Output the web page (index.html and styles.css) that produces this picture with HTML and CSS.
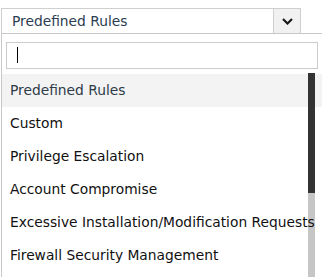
FILE: index.html
```html
<!DOCTYPE html>
<html lang="en">
<head>
    <meta charset="UTF-8">
    <title>Rule Type Select</title>
    <link rel="stylesheet" href="styles.css">
</head>
<body>
    <div class="select">
        <span class="select-value">Predefined Rules</span>
        <span class="select-arrow">
            <svg width="11" height="7" viewBox="0 0 11 7"><path d="M1 1 L5.5 5.5 L10 1" fill="none" stroke="#1a1a1a" stroke-width="2.2"/></svg>
        </span>
    </div>

    <div class="dropdown">
        <div class="search">
            <div class="search-box"><span class="caret"></span></div>
        </div>
        <ul class="options">
            <li class="option active"><span>Predefined Rules</span></li>
            <li class="option"><span>Custom</span></li>
            <li class="option"><span>Privilege Escalation</span></li>
            <li class="option"><span>Account Compromise</span></li>
            <li class="option"><span>Excessive Installation/Modification Requests</span></li>
            <li class="option"><span>Firewall Security Management</span></li>
        </ul>
        <div class="scrollbar"><div class="thumb"></div></div>
    </div>
</body>
</html>
```

FILE: styles.css
```css
* {
    margin: 0;
    padding: 0;
    box-sizing: border-box;
}

body {
    font-family: "DejaVu Sans", Verdana, sans-serif;
    font-size: 13.8px;
    background: #fff;
    color: #111;
    height: 277px;
    overflow: hidden;
}

.select {
    margin: 8px 0 0 1px;
    width: 300px;
    height: 26px;
    border: 1px solid #cfcfcf;
    display: flex;
    align-items: stretch;
}

.select-value {
    flex: 1;
    padding-left: 10px;
    line-height: 24px;
    color: #2b3d4f;
}

.select-arrow {
    width: 27px;
    background: #f1f1f1;
    border-left: 1px solid #cfcfcf;
    display: flex;
    align-items: center;
    justify-content: center;
}

.dropdown {
    position: relative;
    margin: -1px 0 0 1px;
    border-top: 1px solid #c8c8c8;
    border-left: 1px solid #c8c8c8;
    height: 245px;
    overflow: hidden;
}

.search {
    padding: 8px 4px 5px 4px;
}

.search-box {
    width: 312px;
    height: 27px;
    border: 1px solid #cbcbcb;
    padding: 4px 0 0 10px;
}

.caret {
    display: block;
    width: 1px;
    height: 16px;
    background: #000;
}

.options {
    list-style: none;
}

.option {
    height: 33px;
    line-height: 32px;
    padding-left: 8px;
    white-space: nowrap;
    color: #111;
}

.option span {
    position: relative;
    z-index: 2;
}

.option.active {
    background: #f3f3f3;
    color: #2e3b48;
}

.scrollbar {
    position: absolute;
    z-index: 1;
    left: 306px;
    top: 39px;
    width: 7px;
    bottom: 0;
    background: #c6c6c6;
}

.thumb {
    height: 120px;
    background: #333;
}
```
